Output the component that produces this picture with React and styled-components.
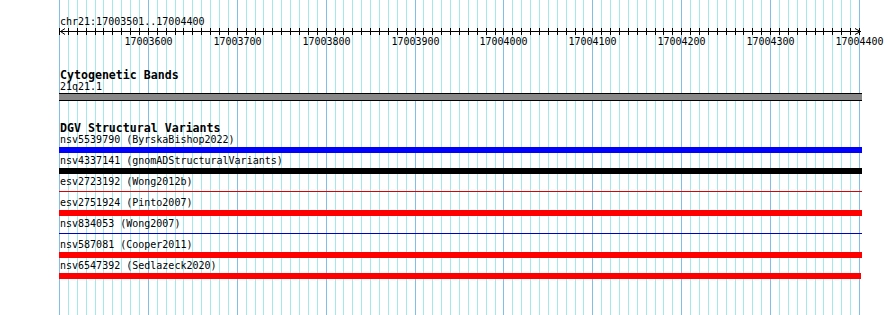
import React from "react";
import styled, { createGlobalStyle } from "styled-components";

const GlobalStyle = createGlobalStyle`
  html, body { margin: 0; padding: 0; background: #fff; }
`;

const LEFT = 59;
const STEP = 800 / 90;
const TRACK_W = 803;

const Page = styled.div`
  position: relative;
  width: 890px;
  height: 315px;
  overflow: hidden;
  background: #fff;
  color: #000;
  font-family: "DejaVu Sans Mono", "Liberation Mono", monospace;
`;

const GridLayer = styled.svg`
  position: absolute;
  left: 0;
  top: 0;
  display: block;
`;

const Tracks = styled.div`
  position: relative;
  display: flex;
  flex-direction: column;
  padding-left: ${LEFT}px;
`;

const ChrLabel = styled.div`
  box-sizing: border-box;
  height: 27px;
  padding: 16.5px 0 0 1px;
  font-size: 10px;
  line-height: 10px;
  white-space: pre;
`;

const RulerSvg = styled.svg`
  display: block;
  overflow: visible;
`;

const TrackTitle = styled.div`
  margin-top: ${(p) => p.$mt}px;
  padding-left: 1px;
  font-weight: bold;
  font-size: 11.6px;
  line-height: 12px;
  white-space: pre;
`;

const ItemLabel = styled.div`
  margin-top: ${(p) => p.$mt || 0}px;
  padding-left: 1px;
  font-size: 10px;
  line-height: 10px;
  height: 10px;
  white-space: pre;
`;

const Band = styled.div`
  box-sizing: border-box;
  margin-top: 1.5px;
  width: ${TRACK_W}px;
  height: 8px;
  background: #888888;
  border-top: 1px solid #000;
  border-bottom: 1px solid #000;
`;

const FeatureList = styled.div`
  margin-top: 1px;
  display: flex;
  flex-direction: column;
`;

const FeatureRow = styled.div`
  display: flex;
  flex-direction: column;
  height: 21px;
`;

const BarSlot = styled.div`
  margin-top: 2px;
  height: 6px;
  display: flex;
  flex-direction: column;
`;

const Bar = styled.div`
  width: ${(p) => p.$w}px;
  height: ${(p) => (p.$thin ? 1 : 6)}px;
  margin-top: ${(p) => (p.$thin ? 2 : 0)}px;
  background: ${(p) => p.$color};
`;

const features = [
  { label: "nsv5539790 (ByrskaBishop2022)", color: "#0000ff" },
  { label: "nsv4337141 (gnomADStructuralVariants)", color: "#000000" },
  { label: "esv2723192 (Wong2012b)", color: "#dd0000", thin: true },
  { label: "esv2751924 (Pinto2007)", color: "#ff0000" },
  { label: "nsv834053 (Wong2007)", color: "#0000cc", thin: true },
  { label: "nsv587081 (Cooper2011)", color: "#ff0000" },
  { label: "nsv6547392 (Sedlazeck2020)", color: "#ff0000", w: 802 },
];

const ks = Array.from({ length: 91 }, (_, k) => k);

function Grid() {
  return (
    <GridLayer width="890" height="315" shapeRendering="crispEdges">
      {ks.map((k) => (
        <rect
          key={k}
          x={LEFT + Math.round(k * STEP)}
          y="0"
          width="1"
          height="315"
          fill={k % 10 === 0 ? "#80c0e8" : "#a4e8ee"}
        />
      ))}
    </GridLayer>
  );
}

function Ruler() {
  const labels = [1, 2, 3, 4, 5, 6, 7, 8, 9];
  return (
    <RulerSvg width="831" height="22">
      <g shapeRendering="crispEdges">
        <rect x="1" y="4" width="801" height="1" fill="#000" />
        {ks.map((k) => (
          <rect key={k} x={Math.round(k * STEP)} y="1" width="1" height="7" fill="#000" />
        ))}
      </g>
      <polyline points="6,1.5 1.5,4.5 6,7.5" fill="none" stroke="#000" strokeWidth="1" />
      <polyline points="796,1.5 801.5,4.5 796,7.5" fill="none" stroke="#000" strokeWidth="1" />
      {labels.map((i) => (
        <text
          key={i}
          x={Math.round(i * 10 * STEP) + 0.5}
          y="18"
          textAnchor="middle"
          fontFamily='"DejaVu Sans Mono", monospace'
          fontSize="10"
          fill="#000"
        >
          {17003500 + i * 100}
        </text>
      ))}
    </RulerSvg>
  );
}

export default function App() {
  return (
    <Page>
      <GlobalStyle />
      <Grid />
      <Tracks>
        <ChrLabel>chr21:17003501..17004400</ChrLabel>
        <Ruler />
        <TrackTitle $mt={19.5}>Cytogenetic Bands</TrackTitle>
        <ItemLabel $mt={1}>21q21.1</ItemLabel>
        <Band />
        <TrackTitle $mt={21}>DGV Structural Variants</TrackTitle>
        <FeatureList>
          {features.map((f) => (
            <FeatureRow key={f.label}>
              <ItemLabel>{f.label}</ItemLabel>
              <BarSlot>
                <Bar $color={f.color} $thin={f.thin} $w={f.w || TRACK_W} />
              </BarSlot>
            </FeatureRow>
          ))}
        </FeatureList>
      </Tracks>
    </Page>
  );
}
